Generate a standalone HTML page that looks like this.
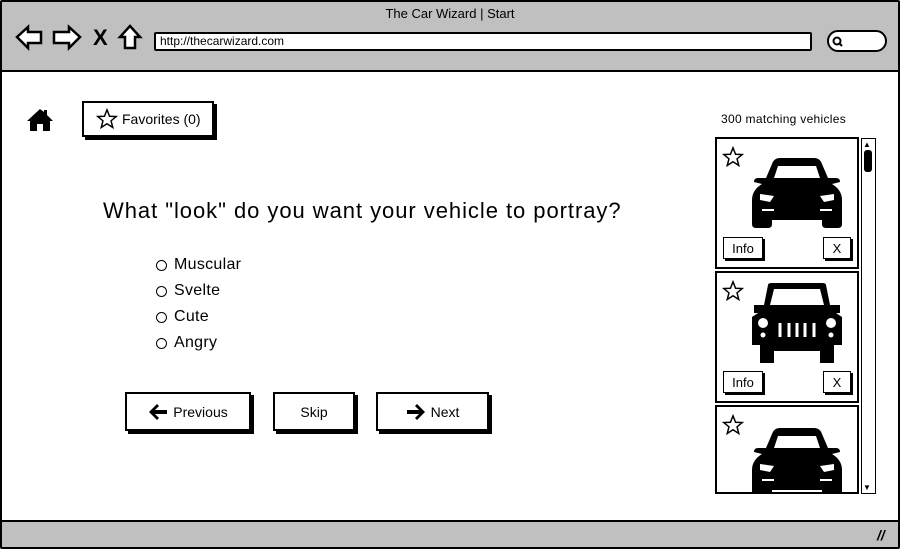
<!DOCTYPE html>
<html><head><style>
*{margin:0;padding:0;box-sizing:border-box}
body{width:900px;height:549px;background:#fff;font-family:"Liberation Sans",sans-serif;position:relative;overflow:hidden;color:#000}
.a{position:absolute}
.btn{position:absolute;border:2px solid #000;background:#fff;box-shadow:3px 3px 0 #000;font-size:14px;display:flex;align-items:center;justify-content:center}
.card{position:absolute;left:715px;width:144px;border:2px solid #000;background:#fff}
.sm{position:absolute;border:1.5px solid #000;background:#fff;box-shadow:2px 2px 0 #000;font-size:13px;display:flex;align-items:center;justify-content:center;height:22px}
.opt{position:absolute;left:156px;font-size:16px;display:flex;align-items:center;letter-spacing:.3px}
.opt i{display:inline-block;width:11px;height:11px;border:1.5px solid #000;border-radius:50%;margin-right:7px}
</style></head><body>
<div class="a" style="left:0;top:0;width:900px;height:549px;border:2px solid #000;border-radius:2px"></div>
<div class="a" style="left:2px;top:2px;width:896px;height:70px;background:#c0c0c0;border-bottom:2px solid #000"></div>
<div class="a" style="left:0;top:6px;width:900px;text-align:center;font-size:13px">The Car Wizard | Start</div>
<svg class="a" style="left:14px;top:24px" width="130" height="28" viewBox="0 0 130 28">
<path d="M3 13 L14 3 L14 8 L27 8 L27 19 L14 19 L14 24 Z" fill="#fff" stroke="#000" stroke-width="2.5"/>
<path d="M66 13 L55 3 L55 8 L40 8 L40 19 L55 19 L55 24 Z" fill="#fff" stroke="#000" stroke-width="2.5"/>
<text x="79" y="21" font-size="22" font-weight="bold" font-family="Liberation Sans">X</text>
<path d="M116 2 L106 13 L111 13 L111 24 L121 24 L121 13 L126 13 Z" fill="#fff" stroke="#000" stroke-width="2.5"/>
</svg>
<div class="a" style="left:154px;top:32px;width:658px;height:19px;background:#fff;border:2px solid #000;border-radius:2px;font-size:12px;padding-left:4px;line-height:15px">http://thecarwizard.com</div>
<div class="a" style="left:827px;top:30px;width:60px;height:22px;background:#fff;border:2px solid #000;border-radius:11px"></div>
<svg class="a" style="left:832px;top:36px" width="12" height="12"><circle cx="5" cy="5" r="3.5" fill="none" stroke="#000" stroke-width="2"/><line x1="7" y1="7" x2="10" y2="10" stroke="#000" stroke-width="2"/></svg>
<div class="a" style="left:2px;top:520px;width:896px;height:27px;background:#c0c0c0;border-top:2px solid #000"></div>
<div class="a" style="left:877px;top:527px;font-size:14px;font-weight:bold;font-style:italic">//</div>

<svg class="a" style="left:26px;top:108px" width="28" height="24" viewBox="0 0 28 24"><path d="M14 1 L1 13 L4 13 L4 23 L11 23 L11 16 L17 16 L17 23 L24 23 L24 13 L27 13 L21 7 L21 2 L18 2 L18 4 Z" fill="#000"/></svg>
<div class="btn" style="left:82px;top:101px;width:132px;height:36px;justify-content:flex-start;padding-left:12px;font-size:14px">
<svg width="22" height="22" viewBox="0 0 24 24" style="margin-right:4px"><path d="M12 2 L14.8 9 L22 9.3 L16.4 14 L18.3 21.3 L12 17.2 L5.7 21.3 L7.6 14 L2 9.3 L9.2 9Z" fill="none" stroke="#000" stroke-width="1.6"/></svg>Favorites (0)</div>

<div class="a" style="left:103px;top:198px;font-size:22px;letter-spacing:0.95px">What "look" do you want your vehicle to portray?</div>
<div class="opt" style="top:256px"><i></i>Muscular</div>
<div class="opt" style="top:282px"><i></i>Svelte</div>
<div class="opt" style="top:308px"><i></i>Cute</div>
<div class="opt" style="top:334px"><i></i>Angry</div>

<div class="btn" style="left:125px;top:392px;width:126px;height:39px"><svg width="20" height="20" viewBox="0 0 20 20" style="margin-right:5px"><path d="M9 2 L1 10 L9 18 L11 16 L7 12 L19 12 L19 8 L7 8 L11 4Z" fill="#000"/></svg>Previous</div>
<div class="btn" style="left:273px;top:392px;width:82px;height:39px">Skip</div>
<div class="btn" style="left:376px;top:392px;width:113px;height:39px"><svg width="20" height="20" viewBox="0 0 20 20" style="margin-right:5px"><path d="M11 2 L19 10 L11 18 L9 16 L13 12 L1 12 L1 8 L13 8 L9 4Z" fill="#000"/></svg>Next</div>

<div class="a" style="left:721px;top:112px;font-size:12px;letter-spacing:.3px">300 matching vehicles</div>

<div class="card" style="top:137px;height:132px"></div>
<div class="card" style="top:271px;height:132px"></div>
<div class="card" style="top:405px;height:89px;overflow:hidden"></div>
<div class="a" style="left:861px;top:138px;width:15px;height:356px;border:1.5px solid #000;background:#fff"></div>
<div class="a" style="left:864px;top:150px;width:8px;height:22px;background:#000;border-radius:3px"></div>
<div class="a" style="left:863px;top:140px;font-size:8px">▲</div>
<div class="a" style="left:863px;top:483px;font-size:8px">▼</div>

<svg width="0" height="0" style="position:absolute"><defs>
<symbol id="star" viewBox="0 0 24 24"><path d="M12 2 L14.8 9 L22 9.3 L16.4 14 L18.3 21.3 L12 17.2 L5.7 21.3 L7.6 14 L2 9.3 L9.2 9Z" fill="none" stroke="#000" stroke-width="1.6"/></symbol>
<symbol id="car" viewBox="0 0 94 70"><path d="M22 6 Q24 0 30 0 L64 0 Q70 0 72 6 L78 20 L86 20 Q90 20 90 24 L82 26 Q92 32 92 42 L92 66 Q92 70 88 70 L76 70 Q72 70 72 66 L72 62 L22 62 L22 66 Q22 70 18 70 L6 70 Q2 70 2 66 L2 42 Q2 32 12 26 L4 24 Q4 20 8 20 L16 20Z M28 8 L24 20 L70 20 L66 8Z" fill="#000" fill-rule="evenodd"/><path d="M10 36 L24 38 L20 44 L10 42Z M84 36 L70 38 L74 44 L84 42Z" fill="#fff"/><path d="M12 52 L24 52 M70 52 L82 52" stroke="#fff" stroke-width="2"/></symbol>
<symbol id="jeep" viewBox="0 0 94 82"><path d="M18 2 Q18 0 22 0 L72 0 Q76 0 76 2 L80 22 L90 22 L90 30 L86 30 L92 34 L92 62 L84 62 L84 80 L70 80 L70 68 L24 68 L24 80 L10 80 L10 62 L2 62 L2 34 L8 30 L4 30 L4 22 L14 22Z M24 6 L20 22 L74 22 L70 6Z" fill="#000" fill-rule="evenodd"/><circle cx="13" cy="40" r="5" fill="#fff"/><circle cx="81" cy="40" r="5" fill="#fff"/><circle cx="13" cy="52" r="2.5" fill="#fff"/><circle cx="81" cy="52" r="2.5" fill="#fff"/><path d="M30 40 V54 M39 40 V54 M47 40 V54 M55 40 V54 M64 40 V54" stroke="#fff" stroke-width="3"/></symbol>
</defs></svg>

<svg class="a" style="left:722px;top:146px" width="22" height="22"><use href="#star"/></svg>
<svg class="a" style="left:750px;top:156px" width="94" height="74"><use href="#car"/></svg>
<div class="sm" style="left:723px;top:237px;width:40px">Info</div>
<div class="sm" style="left:823px;top:237px;width:28px">X</div>

<svg class="a" style="left:722px;top:280px" width="22" height="22"><use href="#star"/></svg>
<svg class="a" style="left:750px;top:283px" width="94" height="82"><use href="#jeep"/></svg>
<div class="sm" style="left:723px;top:371px;width:40px">Info</div>
<div class="sm" style="left:823px;top:371px;width:28px">X</div>

<svg class="a" style="left:722px;top:414px" width="22" height="22"><use href="#star"/></svg>
<svg class="a" style="left:750px;top:426px" width="94" height="66" viewBox="0 0 94 66"><use href="#car" width="94" height="74"/></svg>
</body></html>
